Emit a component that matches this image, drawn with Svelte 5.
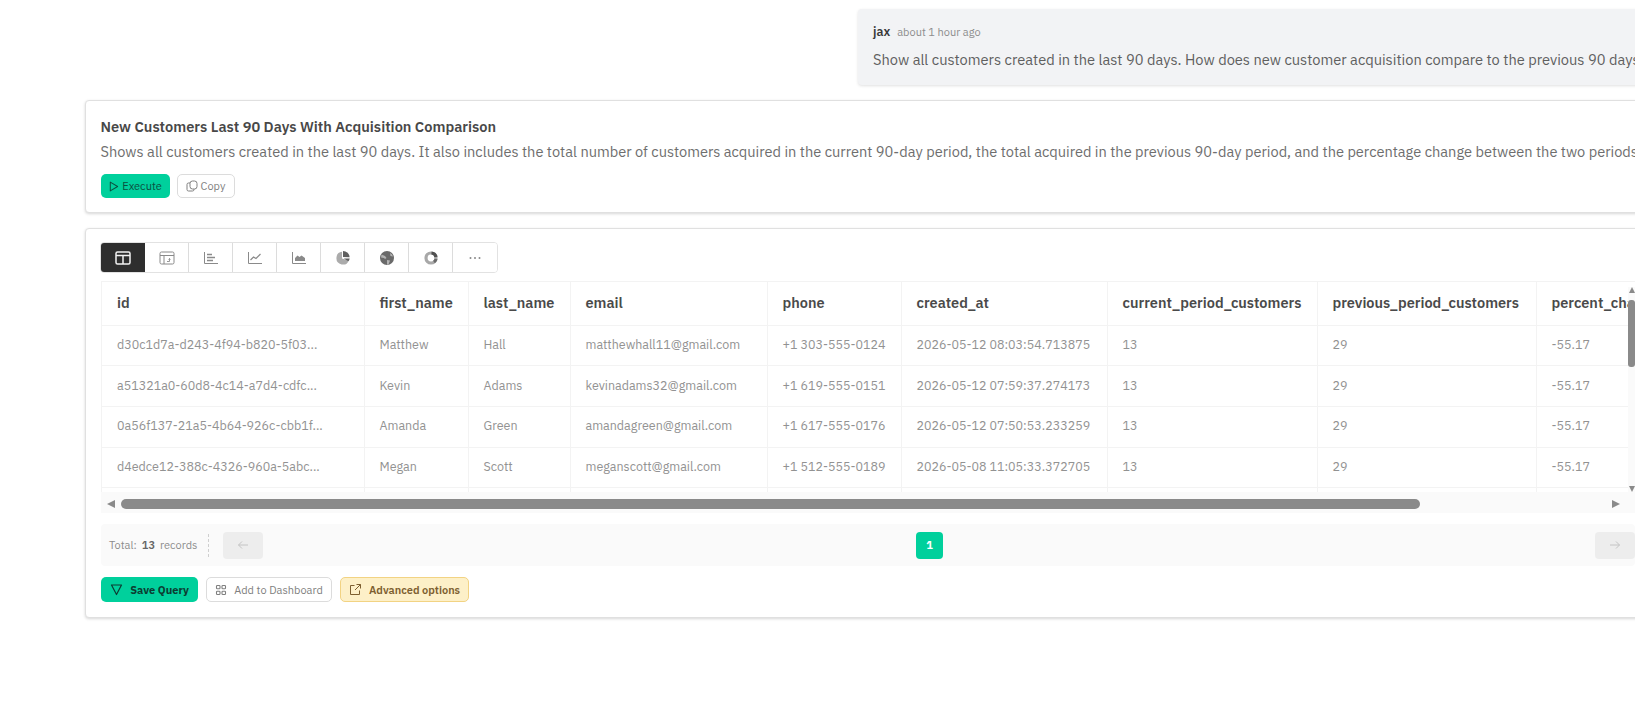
<script>
  const columns = [
    { key: "id", width: 262 },
    { key: "first_name", width: 104 },
    { key: "last_name", width: 102 },
    { key: "email", width: 197 },
    { key: "phone", width: 134 },
    { key: "created_at", width: 206 },
    { key: "current_period_customers", width: 210 },
    { key: "previous_period_customers", width: 219 },
    { key: "percent_change", width: 160 }
  ];

  const rows = [
    ["d30c1d7a-d243-4f94-b820-5f03...", "Matthew", "Hall", "matthewhall11@gmail.com", "+1 303-555-0124", "2026-05-12 08:03:54.713875", "13", "29", "-55.17"],
    ["a51321a0-60d8-4c14-a7d4-cdfc...", "Kevin", "Adams", "kevinadams32@gmail.com", "+1 619-555-0151", "2026-05-12 07:59:37.274173", "13", "29", "-55.17"],
    ["0a56f137-21a5-4b64-926c-cbb1f...", "Amanda", "Green", "amandagreen@gmail.com", "+1 617-555-0176", "2026-05-12 07:50:53.233259", "13", "29", "-55.17"],
    ["d4edce12-388c-4326-960a-5abc...", "Megan", "Scott", "meganscott@gmail.com", "+1 512-555-0189", "2026-05-08 11:05:33.372705", "13", "29", "-55.17"],
    ["", "", "", "", "", "", "", "", ""]
  ];

  const views = ["table", "pivot", "bar", "line", "area", "pie", "map", "donut", "more"];
</script>

<div class="page">
  <div class="bubble-row">
    <div class="bubble">
      <div class="meta"><b>jax</b><span>about 1 hour ago</span></div>
      <p>Show all customers created in the last 90 days. How does new customer acquisition compare to the previous 90 days?</p>
    </div>
  </div>

  <section class="card query">
    <h3>New Customers Last 90 Days With Acquisition Comparison</h3>
    <p>Shows all customers created in the last 90 days. It also includes the total number of customers acquired in the current 90-day period, the total acquired in the previous 90-day period, and the percentage change between the two periods.</p>
    <div class="btns">
      <button class="exec">
        <svg width="11" height="11" viewBox="0 0 12 12" fill="none" stroke="currentColor" stroke-width="1.1" stroke-linejoin="round"><path d="M2.5 1.2 10.5 6l-8 4.8z"/></svg>
        Execute
      </button>
      <button class="copy">
        <svg width="12" height="12" viewBox="0 0 12 12" fill="none" stroke="currentColor" stroke-width="1"><rect x="4" y="1" width="7" height="8" rx="2.5"/><path d="M4 3H2.5A1.5 1.5 0 0 0 1 4.5v5A1.5 1.5 0 0 0 2.5 11h4A1.5 1.5 0 0 0 8 9.5V9"/></svg>
        Copy
      </button>
    </div>
  </section>

  <section class="card results">
    <div class="views">
      {#each views as v, i}
        <button class="view" class:on={i === 0} aria-label={v}>
          {#if v === "table"}
            <svg width="16" height="14" viewBox="0 0 16 14" fill="none" stroke="currentColor" stroke-width="1.5"><rect x="1" y="1" width="14" height="12" rx="1.5"/><path d="M1 4.5h14M8 4.5V13"/></svg>
          {:else if v === "pivot"}
            <svg width="16" height="14" viewBox="0 0 16 14" fill="none" stroke="currentColor" stroke-width="1"><rect x="1" y="1" width="14" height="12" rx="1.5"/><path d="M1 4.5h14M5 4.5V13"/><path d="M8 10.5h2.5V7.5M9.5 8.5l1-1 1 1" stroke-width=".9"/></svg>
          {:else if v === "bar"}
            <svg width="16" height="14" viewBox="0 0 16 14" fill="none" stroke="currentColor"><path d="M1.5 1v11.5H15" stroke-width="1"/><path d="M4 3.5h5M4 6.5h8M4 9.5h6" stroke-width="1.4"/></svg>
          {:else if v === "line"}
            <svg width="16" height="14" viewBox="0 0 16 14" fill="none" stroke="currentColor"><path d="M1.5 1v11.5H15" stroke-width="1"/><path d="M3.5 9l3-3 2.5 1.5L13.5 3" stroke-width="1.2"/></svg>
          {:else if v === "area"}
            <svg width="16" height="14" viewBox="0 0 16 14" fill="none"><path d="M1.5 1v11.5H15" stroke="currentColor"/><path d="M4 10V7l2.5-2.5L8.5 6l2-1.5L14 7v3z" fill="currentColor"/></svg>
          {:else if v === "pie"}
            <svg width="16" height="16" viewBox="0 0 16 16"><path d="M7 1.8a6.4 6.4 0 1 0 6.8 8.6L7 8.4z" fill="#ababab"/><path d="M8 1a6.6 6.6 0 0 1 6.6 6.3L8 7z" fill="#5f5f5f"/><path d="M8.8 8.4l5.9.1a6 6 0 0 1-1.3 2.7z" fill="#5f5f5f"/></svg>
          {:else if v === "map"}
            <svg width="16" height="16" viewBox="0 0 16 16"><circle cx="8" cy="8" r="7" fill="#6a6a6a"/><path d="M2.5 4.5 6 6l1.5 2L6 9 5 8 2 7.5zM8 10l3 .5-1.5 4-1.5.2zM11 3l2 1.5 1 2-2.5-.5z" fill="#b4b4b4"/></svg>
          {:else if v === "donut"}
            <svg width="16" height="16" viewBox="0 0 16 16" fill="none" stroke-width="3.2"><circle cx="8" cy="8" r="5" stroke="#a8a8a8"/><path d="M8.5 3a5 5 0 0 1 4.5 4" stroke="#4f4f4f"/><path d="M13 9a5 5 0 0 1-2 3" stroke="#6a6a6a"/></svg>
          {:else}
            <svg width="14" height="4" viewBox="0 0 14 4" fill="#888"><circle cx="2.5" cy="2" r="1"/><circle cx="7" cy="2" r="1"/><circle cx="11.5" cy="2" r="1"/></svg>
          {/if}
        </button>
      {/each}
    </div>

    <div class="table-wrap">
      <div class="table-clip">
        <table>
          <colgroup>
            {#each columns as c}<col style="width:{c.width}px" />{/each}
          </colgroup>
          <thead>
            <tr>{#each columns as c}<th>{c.key}</th>{/each}</tr>
          </thead>
          <tbody>
            {#each rows as r}
              <tr>{#each r as v}<td>{v}</td>{/each}</tr>
            {/each}
          </tbody>
        </table>
        <div class="vbar">
          <i class="up"></i>
          <i class="vthumb"></i>
          <i class="down"></i>
        </div>
      </div>
      <div class="hbar">
        <i class="left"></i>
        <div class="hthumb"></div>
        <i class="right"></i>
      </div>
    </div>

    <div class="pager">
      <div class="total">Total: <b>13</b> records</div>
      <button class="nav" aria-label="Previous">
        <svg width="12" height="10" viewBox="0 0 12 10" fill="none" stroke="#c4c4c4" stroke-width="1"><path d="M11 5H1.5M5 1.5 1.5 5 5 8.5"/></svg>
      </button>
      <div class="pages"><button class="page-no">1</button></div>
      <button class="nav" aria-label="Next">
        <svg width="12" height="10" viewBox="0 0 12 10" fill="none" stroke="#c4c4c4" stroke-width="1"><path d="M1 5h9.5M7 1.5 10.5 5 7 8.5"/></svg>
      </button>
    </div>

    <div class="actions">
      <button class="save">
        <svg width="13" height="13" viewBox="0 0 13 13" fill="none" stroke="currentColor" stroke-width="1.2" stroke-linejoin="round"><path d="M1.5 2h10L6.5 11.5z"/></svg>
        Save Query
      </button>
      <button class="dash">
        <svg width="12" height="12" viewBox="0 0 12 12" fill="none" stroke="currentColor" stroke-width="1.1"><rect x="1.5" y="1.5" width="3.5" height="3.2" rx=".8"/><rect x="7" y="1.5" width="3.5" height="3.2" rx=".8"/><rect x="1.5" y="7.3" width="3.5" height="3.2" rx=".8"/><rect x="7" y="7.3" width="3.5" height="3.2" rx=".8"/></svg>
        Add to Dashboard
      </button>
      <button class="adv">
        <svg width="13" height="13" viewBox="0 0 13 13" fill="none" stroke="currentColor" stroke-width="1"><path d="M5.5 2.5H1.5v9h9V7.5M7.5 1.5h4v4M11.5 1.5 6 7"/></svg>
        Advanced options
      </button>
    </div>
  </section>
</div>

<style>
  :global(body) {
    margin: 0;
    background: #fff;
    overflow: hidden;
  }

  .page {
    width: 1720px;
    height: 713px;
    padding: 9px 0 0 85px;
    box-sizing: border-box;
    font-family: "IBM Plex Sans", Roboto, "Liberation Sans", sans-serif;
    color: #555;
    overflow: hidden;
  }

  button {
    font-family: inherit;
    cursor: pointer;
  }

  .bubble-row {
    display: flex;
    padding-left: 773px;
  }

  .bubble {
    flex: 1;
    height: 76px;
    box-sizing: border-box;
    padding: 14px 15px;
    background: #f2f3f5;
    border-radius: 4px;
    box-shadow: 0 1px 3px rgba(0, 0, 0, 0.12);
  }

  .meta {
    display: flex;
    align-items: baseline;
    gap: 7px;
    font-size: 11px;
    color: #8d8d8d;
    line-height: 16px;
  }

  .meta b {
    font-size: 12.5px;
    color: #3a3a3a;
    font-weight: 600;
  }

  .bubble p {
    margin: 10px 0 0;
    font-size: 14.65px;
    line-height: 20px;
    color: #5f5f5f;
    white-space: nowrap;
  }

  .card {
    background: #fff;
    border: 1px solid #e0e0e0;
    border-radius: 4px;
    box-shadow: 0 1px 3px rgba(0, 0, 0, 0.16);
    box-sizing: border-box;
  }

  .query {
    margin-top: 15px;
    height: 113px;
    padding: 16px 14.5px;
  }

  .query h3 {
    margin: 0;
    font-size: 14.6px;
    line-height: 20px;
    font-weight: 600;
    color: #484848;
  }

  .query p {
    margin: 5px 0 0;
    font-size: 14.6px;
    line-height: 20px;
    color: #6e6e6e;
    white-space: nowrap;
  }

  .btns {
    display: flex;
    gap: 7px;
    margin-top: 12px;
  }

  .btns button {
    display: flex;
    align-items: center;
    justify-content: center;
    gap: 3px;
    height: 24px;
    padding: 0;
    border-radius: 5px;
    font-size: 11px;
  }

  .exec {
    width: 69px;
    background: #00d09c;
    border: 0;
    color: #0b4f3f;
  }

  .copy {
    width: 58px;
    background: #fff;
    border: 1px solid #dcdcdc;
    color: #808080;
  }

  .results {
    margin-top: 15px;
    height: 390px;
    padding: 13px 14px 14px;
  }

  .views {
    display: inline-flex;
    height: 31px;
    border: 1px solid #e2e2e2;
    border-radius: 4px;
    box-sizing: border-box;
    overflow: hidden;
    vertical-align: top;
  }

  .view {
    width: 44px;
    padding: 0;
    display: flex;
    align-items: center;
    justify-content: center;
    background: #fff;
    border: 0;
    border-right: 1px solid #dcdcdc;
    color: #8a8a8a;
  }

  .view:last-child {
    border-right: 0;
  }

  .view.on {
    background: #2e2e2e;
    color: #f2f2f2;
    border-right: 0;
  }

  .table-wrap {
    margin-top: 8px;
    margin-left: 1px;
    width: 1534px;
    background: #fafafa;
  }

  .table-clip {
    position: relative;
    height: 211px;
    overflow: hidden;
    background: #fff;
    border-top: 1px solid #f3f3f3;
    border-left: 1px solid #f3f3f3;
    box-sizing: border-box;
  }

  table {
    border-collapse: collapse;
    table-layout: fixed;
    width: 1594px;
  }

  th,
  td {
    padding: 0 0 0 15px;
    text-align: left;
    white-space: nowrap;
    overflow: hidden;
    border-right: 1px solid #f3f3f3;
    border-bottom: 1px solid #f3f3f3;
  }

  th {
    height: 43px;
    padding-bottom: 2px;
    box-sizing: border-box;
    font-size: 14.5px;
    font-weight: 600;
    color: #4a4a4a;
  }

  td {
    height: 40.7px;
    padding-bottom: 3px;
    box-sizing: border-box;
    font-size: 12.5px;
    color: #929292;
  }

  .vbar {
    position: absolute;
    top: 5px;
    right: 0;
    bottom: 0;
    width: 7px;
    display: flex;
    flex-direction: column;
    align-items: center;
    background: #fafafa;
  }

  .up {
    width: 0;
    height: 0;
    border: 3.5px solid transparent;
    border-top: 0;
    border-bottom: 6px solid #8a8a8a;
  }

  .vthumb {
    width: 7px;
    height: 67px;
    margin-top: 7px;
    background: #8a8a8a;
    border-radius: 3px;
  }

  .down {
    margin-top: auto;
    width: 0;
    height: 0;
    border: 3.5px solid transparent;
    border-bottom: 0;
    border-top: 6px solid #8a8a8a;
  }

  .hbar {
    display: flex;
    align-items: center;
    height: 21px;
    padding: 3px 15px 0 6px;
    box-sizing: border-box;
  }

  .left {
    width: 0;
    height: 0;
    border: 4.5px solid transparent;
    border-left: 0;
    border-right: 8px solid #8a8a8a;
  }

  .right {
    margin-left: auto;
    width: 0;
    height: 0;
    border: 4.5px solid transparent;
    border-right: 0;
    border-left: 8px solid #8a8a8a;
  }

  .hthumb {
    margin-left: 6px;
    width: 1299px;
    height: 10px;
    background: #8a8a8a;
    border-radius: 5px;
  }

  .pager {
    display: flex;
    align-items: center;
    margin-top: 11px;
    margin-left: 1px;
    width: 1534px;
    height: 42px;
    padding-left: 8px;
    box-sizing: border-box;
    background: #fafafa;
    border-radius: 4px;
  }

  .total {
    width: 99px;
    height: 23px;
    line-height: 23px;
    font-size: 11px;
    color: #8c8c8c;
    border-right: 1px dashed #cfcfcf;
    white-space: nowrap;
    word-spacing: 2.5px;
  }

  .total b {
    color: #666;
    font-weight: 600;
  }

  .nav {
    width: 40px;
    height: 27px;
    margin-left: 14px;
    padding: 0;
    background: #ededed;
    border: 0;
    border-radius: 4px;
    display: flex;
    align-items: center;
    justify-content: center;
  }

  .pages {
    flex: 1;
    padding-left: 653px;
  }

  .page-no {
    display: block;
    width: 27px;
    height: 27px;
    padding: 0;
    border: 0;
    border-radius: 4px;
    background: #00d09c;
    color: #fff;
    font-size: 11px;
    font-weight: 700;
  }

  .pager .nav:last-child {
    margin-left: 0;
  }

  .actions {
    display: flex;
    gap: 8px;
    margin-top: 11px;
    margin-left: 1px;
  }

  .actions button {
    display: flex;
    align-items: center;
    justify-content: center;
    gap: 7px;
    height: 25px;
    padding: 0;
    border-radius: 5px;
    font-size: 11px;
  }

  .save {
    width: 97px;
    background: #00d09c;
    border: 0;
    color: #0c3d32;
    font-weight: 700;
  }

  .dash {
    width: 126px;
    background: #fff;
    border: 1px solid #dcdcdc;
    color: #808080;
  }

  .adv {
    width: 129px;
    background: #fdf0c8;
    border: 1px solid #f2d383;
    color: #7d5f30;
    font-weight: 600;
  }
</style>
